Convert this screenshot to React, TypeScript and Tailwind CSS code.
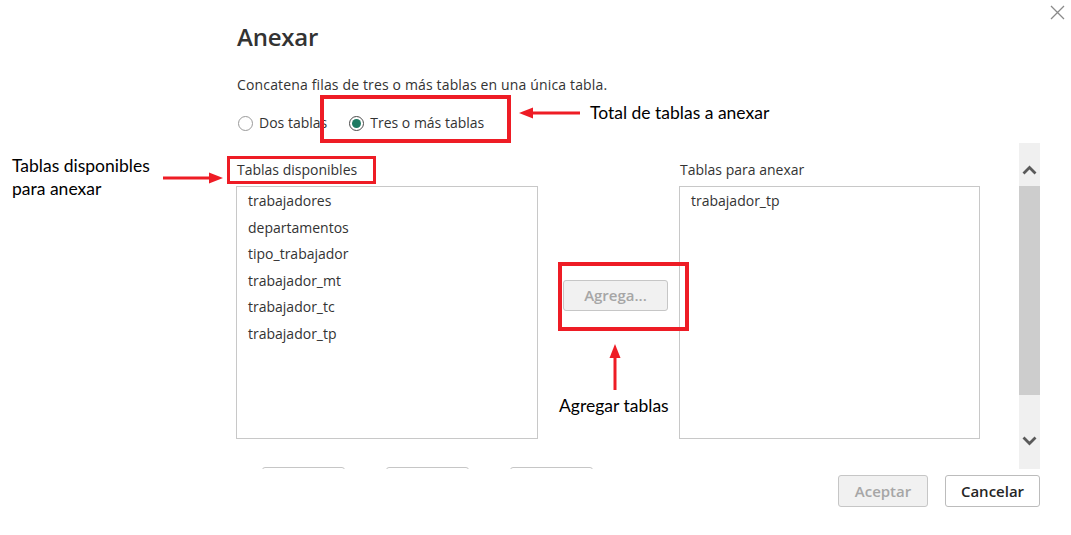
import React from 'react';

const disponibles = [
  'trabajadores',
  'departamentos',
  'tipo_trabajador',
  'trabajador_mt',
  'trabajador_tc',
  'trabajador_tp',
];

const Radio: React.FC<{ checked?: boolean; label: string }> = ({ checked, label }) => (
  <label className="flex items-center gap-[6px]">
    <span
      className={
        checked
          ? 'w-[15px] h-[15px] rounded-full border border-[#4a4a4a] flex items-center justify-center bg-white'
          : 'w-[15px] h-[15px] rounded-full border border-[#9a9a9a] bg-white'
      }
    >
      {checked && <span className="w-[9px] h-[9px] rounded-full bg-[#1d7a62]" />}
    </span>
    <span>{label}</span>
  </label>
);

const Chevron: React.FC<{ up?: boolean }> = ({ up }) => (
  <svg width="15" height="10" viewBox="0 0 15 10">
    <path
      d={up ? 'M1.5 8.5 L7.5 2.5 L13.5 8.5' : 'M1.5 1.5 L7.5 7.5 L13.5 1.5'}
      fill="none"
      stroke="#5a5a5a"
      strokeWidth="2.8"
    />
  </svg>
);

const App: React.FC = () => {
  return (
    <div className="relative w-[1071px] h-[535px] bg-white overflow-hidden text-[#333333] font-['Open_Sans',_'Noto_Sans',_sans-serif]">
      {/* close */}
      <svg className="absolute left-[1050px] top-[5px]" width="15" height="15" viewBox="0 0 15 15">
        <path d="M1 1 L14 14 M14 1 L1 14" stroke="#8a8a8a" strokeWidth="1.3" />
      </svg>

      <div className="pl-[236px] pt-[21px]">
        <h1 className="ml-[1px] text-[24px] leading-[32px] font-semibold tracking-[-0.2px]">Anexar</h1>
        <p className="ml-[1px] mt-[22px] text-[14px] leading-[20px] tracking-[0.15px]">
          Concatena filas de tres o más tablas en una única tabla.
        </p>
        <div className="ml-[2px] mt-[18px] flex items-center gap-[22px] text-[14px] leading-[20px]">
          <Radio label="Dos tablas" />
          <Radio checked label="Tres o más tablas" />
        </div>

        <div className="mt-[10px] flex">
          <div className="w-[783px] h-[326px] overflow-hidden pt-[17px]">
            <div className="flex text-[14px]">
              <div className="w-[302px]">
                <div className="ml-[1px] leading-[20px]">Tablas disponibles</div>
                <ul className="mt-[6px] h-[253px] border border-[#c8c8c8] pl-[11px] py-[1px]">
                  {disponibles.map(t => (
                    <li key={t} className="leading-[26.6px]">{t}</li>
                  ))}
                </ul>
              </div>
              <div className="w-[141px] pl-[25px] pt-[120px]">
                <button className="w-[105px] h-[31px] rounded-[3px] border border-[#c6c6c6] bg-[#f1f1f1] text-[#a6a6a6] font-semibold text-[15px]">
                  Agrega...
                </button>
              </div>
              <div className="w-[301px]">
                <div className="ml-[1px] leading-[20px]">Tablas para anexar</div>
                <ul className="mt-[6px] h-[253px] border border-[#c8c8c8] pl-[11px] py-[1px]">
                  <li className="leading-[26.6px]">trabajador_tp</li>
                </ul>
              </div>
            </div>
            <div className="mt-[28px] ml-[26px] flex gap-[41px]">
              <div className="w-[83px] h-[32px] rounded-[3px] border border-[#c6c6c6]" />
              <div className="w-[83px] h-[32px] rounded-[3px] border border-[#c6c6c6]" />
              <div className="w-[83px] h-[32px] rounded-[3px] border border-[#c6c6c6]" />
            </div>
          </div>
          <div className="w-[21px] h-[326px] bg-[#f0f0f0] flex flex-col">
            <div className="h-[43px] flex justify-center pt-[22px]">
              <Chevron up />
            </div>
            <div className="h-[209px] bg-[#cdcdcd]" />
            <div className="flex justify-center pt-[41px]">
              <Chevron />
            </div>
          </div>
        </div>
      </div>

      <div className="mt-[6px] pr-[31px] flex justify-end gap-[17px] text-[15px]">
        <button className="w-[90px] h-[32px] rounded-[3px] border border-[#c6c6c6] bg-[#f1f1f1] text-[#a6a6a6] font-semibold">
          Aceptar
        </button>
        <button className="w-[95px] h-[32px] rounded-[3px] border border-[#bcbcbc] bg-white text-[#252525] font-semibold">
          Cancelar
        </button>
      </div>

      {/* annotations */}
      <div className="absolute left-[320px] top-[95px] w-[191px] h-[48px] border-[4px] border-[#ee1c25]" />
      <div className="absolute left-[227px] top-[156px] w-[149px] h-[28px] border-[3px] border-[#ee1c25]" />
      <div className="absolute left-[558px] top-[262px] w-[131px] h-[69px] border-[4px] border-[#ee1c25]" />

      <svg className="absolute left-[518px] top-[106px]" width="64" height="14" viewBox="0 0 64 14">
        <path d="M14 7 L62 7" stroke="#ee1c25" strokeWidth="3" />
        <path d="M1 7 L15 1.5 L15 12.5 Z" fill="#ee1c25" />
      </svg>
      <svg className="absolute left-[162px] top-[171px]" width="62" height="14" viewBox="0 0 62 14">
        <path d="M1 7 L48 7" stroke="#ee1c25" strokeWidth="3" />
        <path d="M61 7 L47 1.5 L47 12.5 Z" fill="#ee1c25" />
      </svg>
      <svg className="absolute left-[608px] top-[343px]" width="14" height="48" viewBox="0 0 14 48">
        <path d="M7 13 L7 47" stroke="#ee1c25" strokeWidth="3" />
        <path d="M7 1 L1.5 15 L12.5 15 Z" fill="#ee1c25" />
      </svg>

      <div className="absolute left-[590px] top-[101px] text-[17.5px] leading-[23px] text-black font-['Lato',_sans-serif]">
        Total de tablas a anexar
      </div>
      <div className="absolute left-[12px] top-[154px] text-[17.5px] leading-[23px] text-black font-['Lato',_sans-serif]">
        Tablas disponibles
        <br />
        para anexar
      </div>
      <div className="absolute left-[559px] top-[394px] text-[17.5px] leading-[23px] text-black font-['Lato',_sans-serif]">
        Agregar tablas
      </div>
    </div>
  );
};

export default App;
